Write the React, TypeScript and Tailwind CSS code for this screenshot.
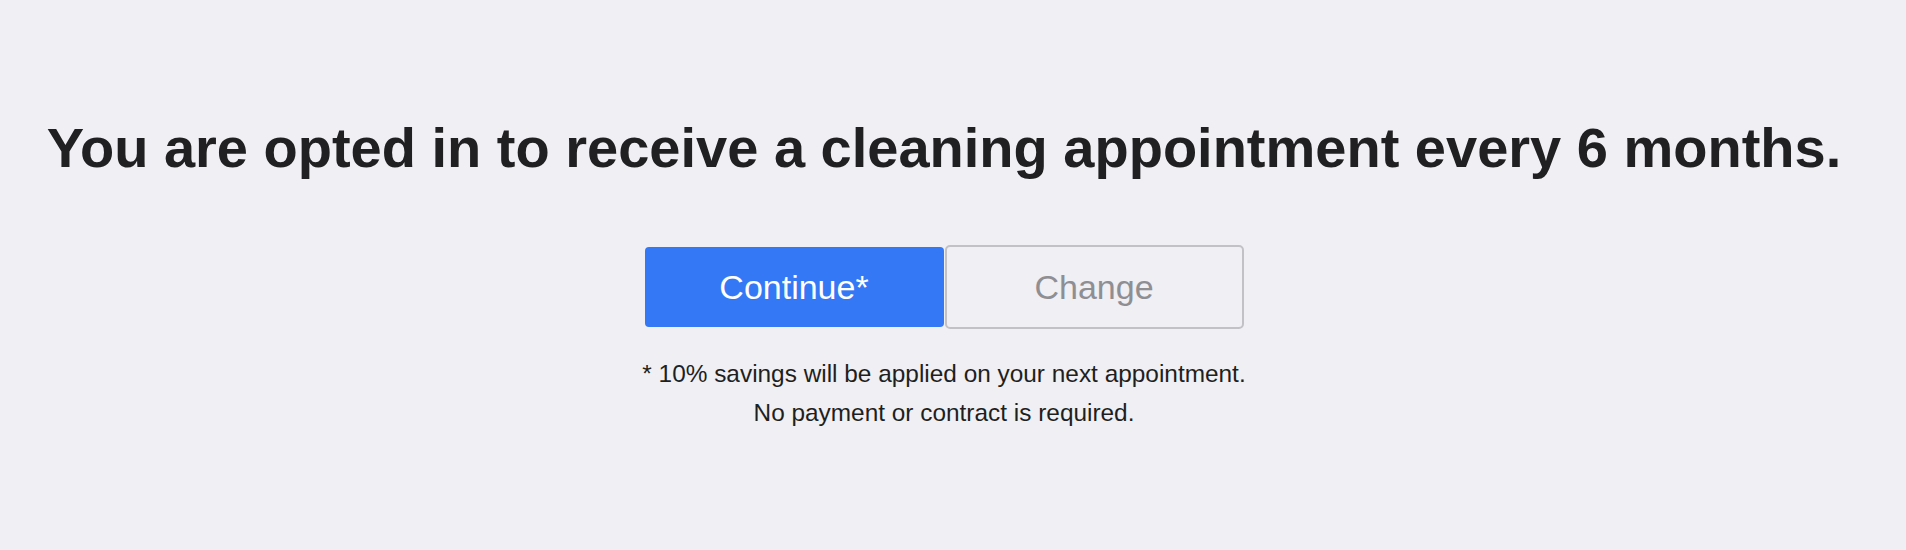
import React from 'react'

function App() {
  return (
    <div className="min-h-[550px] w-full bg-[#efeff4] font-['Liberation_Sans',Arial,sans-serif]">
      <div className="flex w-[1888px] flex-col items-center pt-[116px]">
        <h1 className="whitespace-nowrap text-[56px] font-bold leading-[64px] text-[#202022]">
          You are opted in to receive a cleaning appointment every 6 months.
        </h1>
        <div className="mt-[65px] flex flex-row items-center gap-[1px]">
          <button className="flex h-[80px] w-[299px] items-center justify-center rounded-[4px] bg-[#3478f6] text-[34px] text-white">
            Continue*
          </button>
          <button className="flex h-[84px] w-[299px] items-center justify-center rounded-[5px] border-2 border-[#c2c2c6] bg-[#efeff4] text-[34px] text-[#8e8e93]">
            Change
          </button>
        </div>
        <div className="mt-[25px] text-center text-[24.4px] leading-[39px] text-[#1f1f21]">
          <p>* 10% savings will be applied on your next appointment.</p>
          <p>No payment or contract is required.</p>
        </div>
      </div>
    </div>
  )
}

export default App
